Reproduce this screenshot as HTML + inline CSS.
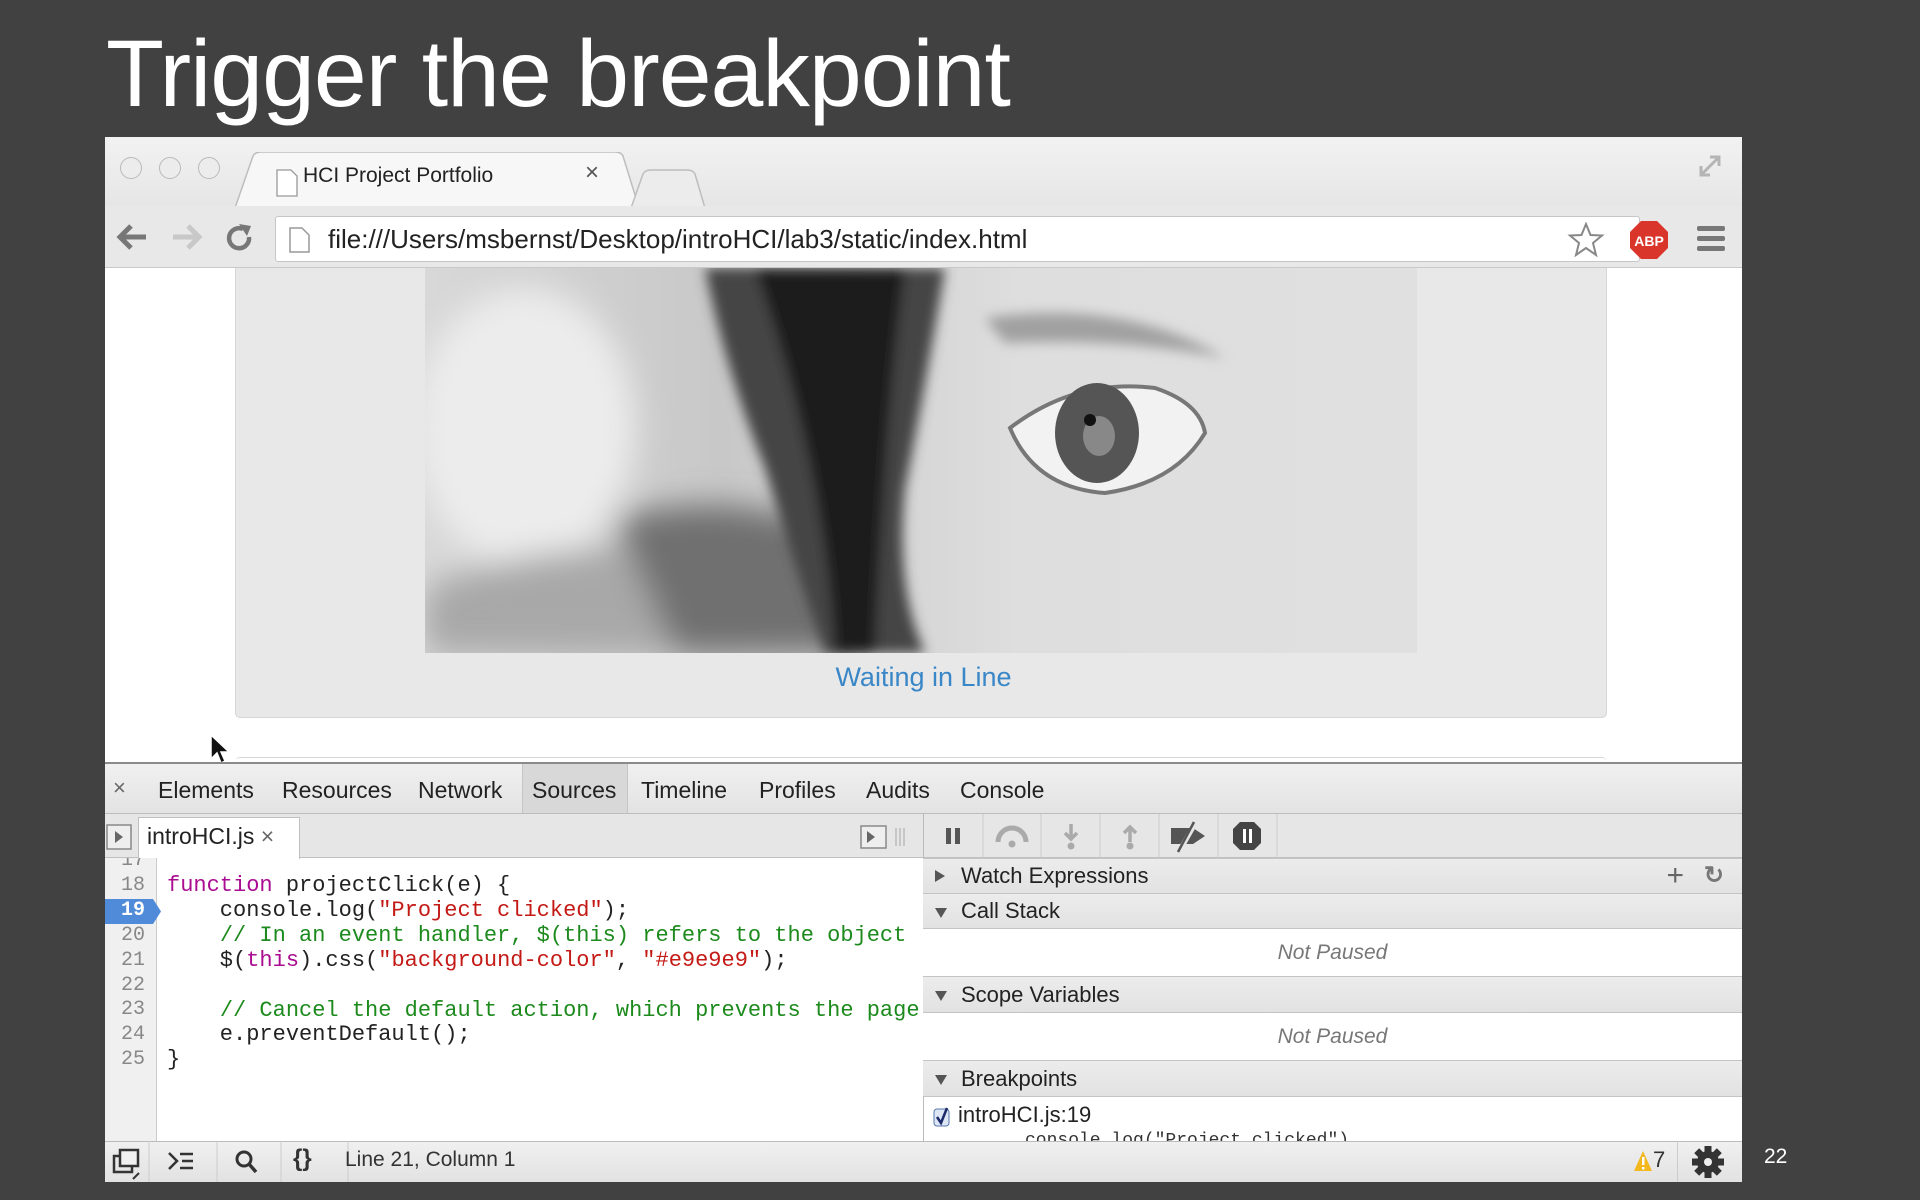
<!DOCTYPE html>
<html><head><meta charset="utf-8"><style>
*{margin:0;padding:0;box-sizing:border-box}
body{width:1920px;height:1200px;background:#414141;position:relative;overflow:hidden;font-family:"Liberation Sans",sans-serif}
.abs{position:absolute}
.title{left:106px;top:20px;font-size:95px;color:#fff;letter-spacing:-1px}
.win{left:105px;top:137px;width:1637px;height:1045px;background:#fff;overflow:hidden}
.tabbar{left:0;top:0;width:100%;height:69px;background:linear-gradient(#f2f2f2,#e6e6e6)}
.toolbar{left:0;top:69px;width:100%;height:62px;background:#e8e8e8;border-bottom:1px solid #c8c8c8}
.dot{width:22px;height:22px;border-radius:50%;border:1.5px solid #b9b9b9;background:#ececec;top:20px}
.url{left:170px;top:10px;width:1365px;height:46px;background:#fff;border:1px solid #c6c6c6;border-radius:3px;font-size:26px;color:#222;padding-left:52px;line-height:44px}
.dt{font-size:23px;color:#222}
.mono{font-family:"Liberation Mono",monospace;font-size:22px;white-space:pre}
.sec{left:818px;width:819px;background:linear-gradient(#ececec,#e2e2e2);border-top:1px solid #c4c4c4;border-bottom:1px solid #c4c4c4;font-size:22px;color:#222;padding-left:38px}
.tri{position:absolute;left:12px;width:0;height:0}
.np{left:818px;width:819px;text-align:center;font-style:italic;font-size:21px;color:#777;background:#fff}
</style></head><body>
<div class="abs title">Trigger the breakpoint</div>
<div class="abs win">
  <div class="abs tabbar"></div>
  <div class="abs dot" style="left:15px"></div>
  <div class="abs dot" style="left:54px"></div>
  <div class="abs dot" style="left:93px"></div>
  <svg class="abs" style="left:130px;top:15px" width="600" height="56"><path d="M0 56 L18 4 Q20 0 26 0 L380 0 Q386 0 388 4 L404 56" fill="#f7f7f7" stroke="#bdbdbd" stroke-width="1.5"/><path d="M396 56 L408 22 Q410 18 416 18 L452 18 Q458 18 460 22 L470 56" fill="#ececec" stroke="#bdbdbd" stroke-width="1.5"/><path d="M42 18 h14 l6 6 v20 h-20z" fill="#fff" stroke="#999" stroke-width="1.3"/></svg>
  <div class="abs" style="left:198px;top:27px;font-size:21px;color:#222">HCI Project Portfolio</div>
  <div class="abs" style="left:480px;top:22px;font-size:24px;color:#555">×</div>
  <svg class="abs" style="left:1590px;top:14px" width="30" height="30"><path d="M6 24 L24 6 M15 6 h9 v9 M6 15 v9 h9" stroke="#b5b5b5" stroke-width="3" fill="none"/></svg>
  <div class="abs toolbar">
    <svg class="abs" style="left:10px;top:14px" width="150" height="34"><path d="M5 17 h26 M16 6 L5 17 L16 28" stroke="#777" stroke-width="5" fill="none"/><path d="M58 17 h26 M73 6 L84 17 L73 28" stroke="#c8c8c8" stroke-width="5" fill="none"/><path d="M128 9 A10 10 0 1 0 134 17" stroke="#777" stroke-width="4.5" fill="none"/><path d="M124 4 L136 6 L132 16z" fill="#777"/></svg>
    <div class="abs url">file:///Users/msbernst/Desktop/introHCI/lab3/static/index.html</div>
    <svg class="abs" style="left:183px;top:20px" width="24" height="28"><path d="M2 2 h12 l7 7 v17 h-19z" fill="#fff" stroke="#999" stroke-width="1.5"/></svg>
    <svg class="abs" style="left:1462px;top:16px" width="38" height="36"><path d="M19 2 L23.5 13 L35 13.5 L26 21 L29 33 L19 26 L9 33 L12 21 L3 13.5 L14.5 13z" fill="#fff" stroke="#888" stroke-width="2"/></svg>
    <svg class="abs" style="left:1524px;top:14px" width="40" height="40"><polygon points="12,1 28,1 39,12 39,28 28,39 12,39 1,28 1,12" fill="#d9352a"/><text x="20" y="26" font-size="14" font-weight="bold" fill="#fff" text-anchor="middle" font-family="Liberation Sans">ABP</text></svg>
    <svg class="abs" style="left:1590px;top:18px" width="32" height="30"><rect x="2" y="2" width="28" height="5" rx="2" fill="#777"/><rect x="2" y="12" width="28" height="5" rx="2" fill="#777"/><rect x="2" y="22" width="28" height="5" rx="2" fill="#777"/></svg>
  </div>
  <!-- page -->
  <div class="abs" style="left:130px;top:131px;width:1372px;height:450px;background:#e8e8e8;border:1px solid #d6d6d6;border-top:none;border-radius:0 0 5px 5px"></div>
  <div class="abs" style="left:130px;top:620px;width:1372px;height:6px;border-top:1px solid #d6d6d6;border-radius:5px 5px 0 0"></div>
  <svg class="abs" style="left:320px;top:131px" width="992" height="385" viewBox="0 0 992 385">
    <defs><filter id="b"><feGaussianBlur stdDeviation="16"/></filter><filter id="b2"><feGaussianBlur stdDeviation="6"/></filter>
    <linearGradient id="g" x1="0" x2="1"><stop offset="0" stop-color="#d8d8d8"/><stop offset="0.3" stop-color="#c8c8c8"/><stop offset="0.6" stop-color="#dedede"/><stop offset="1" stop-color="#e0e0e0"/></linearGradient></defs>
    <rect width="992" height="385" fill="url(#g)"/>
    <g filter="url(#b)">
      <ellipse cx="100" cy="160" rx="110" ry="140" fill="#ececec"/>
      <path d="M0 320 Q150 260 300 290 L330 385 L0 385z" fill="#a8a8a8"/>
      <path d="M190 250 Q300 220 400 260 L440 385 L250 385z" fill="#707070"/>
    </g>
    <g filter="url(#b2)">
      <path d="M280 0 L520 0 Q500 120 480 220 Q470 320 500 385 L400 385 Q370 300 340 200 Q300 100 280 0z" fill="#444"/>
      <path d="M330 0 L480 0 Q460 150 450 385 L410 385 Q400 200 330 0z" fill="#1e1e1e"/>
      <path d="M560 50 Q700 30 800 90 Q700 70 580 75z" fill="#a0a0a0"/>
    </g>
    <path d="M585 160 Q650 110 730 120 Q775 135 780 165 Q750 215 680 225 Q610 220 585 160z" fill="#f2f2f2" stroke="#777" stroke-width="4"/>
    <ellipse cx="672" cy="165" rx="42" ry="50" fill="#555"/>
    <ellipse cx="674" cy="168" rx="16" ry="20" fill="#888"/>
    <circle cx="665" cy="152" r="6" fill="#111"/>
  </svg>
  <div class="abs" style="left:0;top:525px;width:1637px;text-align:center;font-size:27px;color:#3a87c8">Waiting in Line</div>
  <svg class="abs" style="left:104px;top:596px" width="24" height="34"><path d="M2 2 L2 26 L8 20 L12 30 L16 28 L12 19 L20 19z" fill="#111" stroke="#fff" stroke-width="1.5"/></svg>
  <!-- devtools -->
  <div class="abs" style="left:0;top:625px;width:1637px;height:2px;background:#8a8a8a"></div>
  <div class="abs" style="left:0;top:627px;width:1637px;height:50px;background:linear-gradient(#f0f0f0,#e3e3e3);border-bottom:1px solid #bdbdbd"></div>
  <div class="abs" style="left:417px;top:627px;width:106px;height:49px;background:#d8d8d8;border-left:1px solid #c5c5c5;border-right:1px solid #c5c5c5"></div>
  <div class="abs dt" style="left:8px;top:638px;font-size:22px;color:#666">×</div>
  <div class="abs dt" style="left:53px;top:640px">Elements</div>
  <div class="abs dt" style="left:177px;top:640px">Resources</div>
  <div class="abs dt" style="left:313px;top:640px">Network</div>
  <div class="abs dt" style="left:427px;top:640px">Sources</div>
  <div class="abs dt" style="left:536px;top:640px">Timeline</div>
  <div class="abs dt" style="left:654px;top:640px">Profiles</div>
  <div class="abs dt" style="left:761px;top:640px">Audits</div>
  <div class="abs dt" style="left:855px;top:640px">Console</div>
  <!-- file tab row -->
  <div class="abs" style="left:0;top:677px;width:818px;height:44px;background:#e6e6e6;border-bottom:1px solid #c0c0c0"></div>
  <svg class="abs" style="left:0;top:686px" width="30" height="28"><rect x="2" y="2" width="24" height="24" fill="#eee" stroke="#888" stroke-width="1.5"/><path d="M10 8 L18 14 L10 20z" fill="#666"/></svg>
  <div class="abs" style="left:33px;top:680px;width:162px;height:42px;background:#fff;border:1px solid #c0c0c0;border-bottom:none"></div>
  <div class="abs dt" style="left:42px;top:686px">introHCI.js <span style="color:#666">×</span></div>
  <svg class="abs" style="left:755px;top:686px" width="50" height="28"><rect x="1" y="3" width="25" height="22" fill="#eee" stroke="#888" stroke-width="1.5"/><path d="M7 8 L15 14 L7 20z" fill="#666"/><path d="M36 5 v18 M40 5 v18 M44 5 v18" stroke="#bbb" stroke-width="1.5"/></svg>
  <!-- code -->
  <div class="abs" style="left:0;top:721px;width:52px;height:283px;background:#f0f0f0;border-right:1px solid #ccc;overflow:hidden">
    <div class="abs" style="left:0;top:41px;width:48px;height:25px;background:#4f8bd8"></div>
    <div class="abs mono" style="left:16px;top:-9px;line-height:24.9px;color:#888;font-size:20px">17
18
<span style="color:#fff;font-weight:bold">19</span>
20
21
22
23
24
25</div>
  </div>
  <svg class="abs" style="left:48px;top:762px" width="10" height="25"><path d="M0 0 L8 12.5 L0 25z" fill="#4f8bd8"/></svg>
  <div class="abs" style="left:53px;top:721px;width:765px;height:283px;overflow:hidden">
  <div class="abs mono" style="left:9px;top:16px;line-height:24.9px;color:#222"><span style="color:#aa0d91">function</span> projectClick(e) {
    console.log(<span style="color:#c41a16">"Project clicked"</span>);
    <span style="color:#1c8a1c">// In an event handler, $(this) refers to the object</span>
    $(<span style="color:#aa0d91">this</span>).css(<span style="color:#c41a16">"background-color"</span>, <span style="color:#c41a16">"#e9e9e9"</span>);

    <span style="color:#1c8a1c">// Cancel the default action, which prevents the page</span>
    e.preventDefault();
}</div></div>
  <!-- right panel -->
  <div class="abs" style="left:818px;top:677px;width:819px;height:327px;background:#fff;border-left:1px solid #bbb"></div>
  <div class="abs" style="left:819px;top:677px;width:818px;height:44px;background:#e6e6e6;border-bottom:1px solid #c0c0c0"></div>
  <svg class="abs" style="left:819px;top:677px" width="360" height="44">
    <rect x="22" y="14" width="5" height="16" fill="#555"/><rect x="31" y="14" width="5" height="16" fill="#555"/>
    <path d="M59 0 v44 M117 0 v44 M176 0 v44 M235 0 v44 M294 0 v44 M353 0 v44" stroke="#ccc"/>
    <path d="M74 28 A14 14 0 0 1 102 28" stroke="#aaa" stroke-width="5" fill="none"/><circle cx="88" cy="30" r="3.5" fill="#aaa"/>
    <path d="M147 10 v14 M141 19 L147 25 L153 19" stroke="#aaa" stroke-width="3.5" fill="none"/><circle cx="147" cy="32" r="3.5" fill="#aaa"/>
    <path d="M206 14 v14 M200 19 L206 13 L212 19" stroke="#aaa" stroke-width="3.5" fill="none"/><circle cx="206" cy="32" r="3.5" fill="#aaa"/>
    <path d="M247 14 h22 l12 8 l-12 8 h-22z" fill="#555"/><path d="M256 36 L272 8" stroke="#e6e6e6" stroke-width="5"/><path d="M254 38 L270 8" stroke="#555" stroke-width="2.5"/>
    <polygon points="316,8 330,8 337,15 337,29 330,36 316,36 309,29 309,15" fill="#444"/><rect x="319" y="15" width="3" height="14" fill="#fff"/><rect x="325" y="15" width="3" height="14" fill="#fff"/>
  </svg>
  <div class="abs sec" style="top:721px;height:36px;line-height:34px">Watch Expressions<span class="tri" style="top:11px;border-left:10px solid #555;border-top:6px solid transparent;border-bottom:6px solid transparent"></span><span style="position:absolute;right:58px;top:0;font-size:30px;color:#666">+</span><span style="position:absolute;right:18px;top:0;font-size:24px;color:#777;font-weight:bold">↻</span></div>
  <div class="abs sec" style="top:756px;height:36px;line-height:34px">Call Stack<span class="tri" style="top:14px;border-top:10px solid #555;border-left:6px solid transparent;border-right:6px solid transparent"></span></div>
  <div class="abs np" style="top:792px;height:47px;line-height:47px">Not Paused</div>
  <div class="abs sec" style="top:839px;height:37px;line-height:35px">Scope Variables<span class="tri" style="top:14px;border-top:10px solid #555;border-left:6px solid transparent;border-right:6px solid transparent"></span></div>
  <div class="abs np" style="top:876px;height:47px;line-height:47px">Not Paused</div>
  <div class="abs sec" style="top:923px;height:37px;line-height:35px">Breakpoints<span class="tri" style="top:14px;border-top:10px solid #555;border-left:6px solid transparent;border-right:6px solid transparent"></span></div>
  <svg class="abs" style="left:828px;top:969px" width="20" height="22"><rect x="1" y="3" width="15" height="17" rx="3" fill="#dde6f5" stroke="#5577aa"/><path d="M4 11 L8 17 L14 2" stroke="#1a2a6a" stroke-width="2.5" fill="none"/></svg>
  <div class="abs" style="left:853px;top:965px;font-size:22px;color:#222">introHCI.js:19</div>
  <div class="abs mono" style="left:920px;top:994px;font-size:18px;color:#333;height:10px;overflow:hidden">console.log("Project clicked")</div>
  <!-- status -->
  <div class="abs" style="left:0;top:1004px;width:1637px;height:41px;background:linear-gradient(#f0f0f0,#e2e2e2);border-top:1px solid #bbb"></div>
  <svg class="abs" style="left:0;top:1004px" width="420" height="41">
    <path d="M44 0 v41 M112 0 v41 M176 0 v41 M243 0 v41" stroke="#ccc"/>
    <rect x="9" y="15" width="18" height="16" fill="none" stroke="#333" stroke-width="2.5"/><rect x="15" y="9" width="18" height="16" fill="#f0f0f0" stroke="#333" stroke-width="2.5"/><path d="M28 38 L34 32" stroke="#333" stroke-width="2"/>
    <path d="M64 12 L72 20 L64 28" stroke="#333" stroke-width="2.5" fill="none"/><path d="M75 13 h13 M77 20 h11 M75 27 h13" stroke="#333" stroke-width="2.5"/>
    <circle cx="139" cy="18" r="7" fill="none" stroke="#333" stroke-width="3"/><path d="M144 23 L151 31" stroke="#333" stroke-width="3.5"/>
  </svg>
  <div class="abs" style="left:188px;top:1008px;font-size:24px;color:#333;font-weight:bold">{}</div>
  <div class="abs" style="left:240px;top:1011px;font-size:21px;color:#333">Line 21, Column 1</div>
  <svg class="abs" style="left:1528px;top:1013px" width="20" height="22"><path d="M10 1 L19 21 H1z" fill="#f2b81e"/><rect x="9" y="7" width="2.5" height="8" fill="#fff"/><rect x="9" y="17" width="2.5" height="2.5" fill="#fff"/></svg>
  <div class="abs" style="left:1548px;top:1010px;font-size:22px;color:#333">7</div>
  <div class="abs" style="left:1572px;top:1004px;width:1px;height:41px;background:#ccc"></div>
  <svg class="abs" style="left:1586px;top:1008px" width="34" height="34" viewBox="-17 -17 34 34"><g fill="#333"><circle r="11"/><g id="t"><rect x="-3.5" y="-16" width="7" height="8"/></g><use href="#t" transform="rotate(45)"/><use href="#t" transform="rotate(90)"/><use href="#t" transform="rotate(135)"/><use href="#t" transform="rotate(180)"/><use href="#t" transform="rotate(225)"/><use href="#t" transform="rotate(270)"/><use href="#t" transform="rotate(315)"/></g><circle r="4" fill="#eee"/></svg>
</div>
<div class="abs" style="left:1764px;top:1145px;font-size:21px;color:#fff">22</div>
</body></html>
